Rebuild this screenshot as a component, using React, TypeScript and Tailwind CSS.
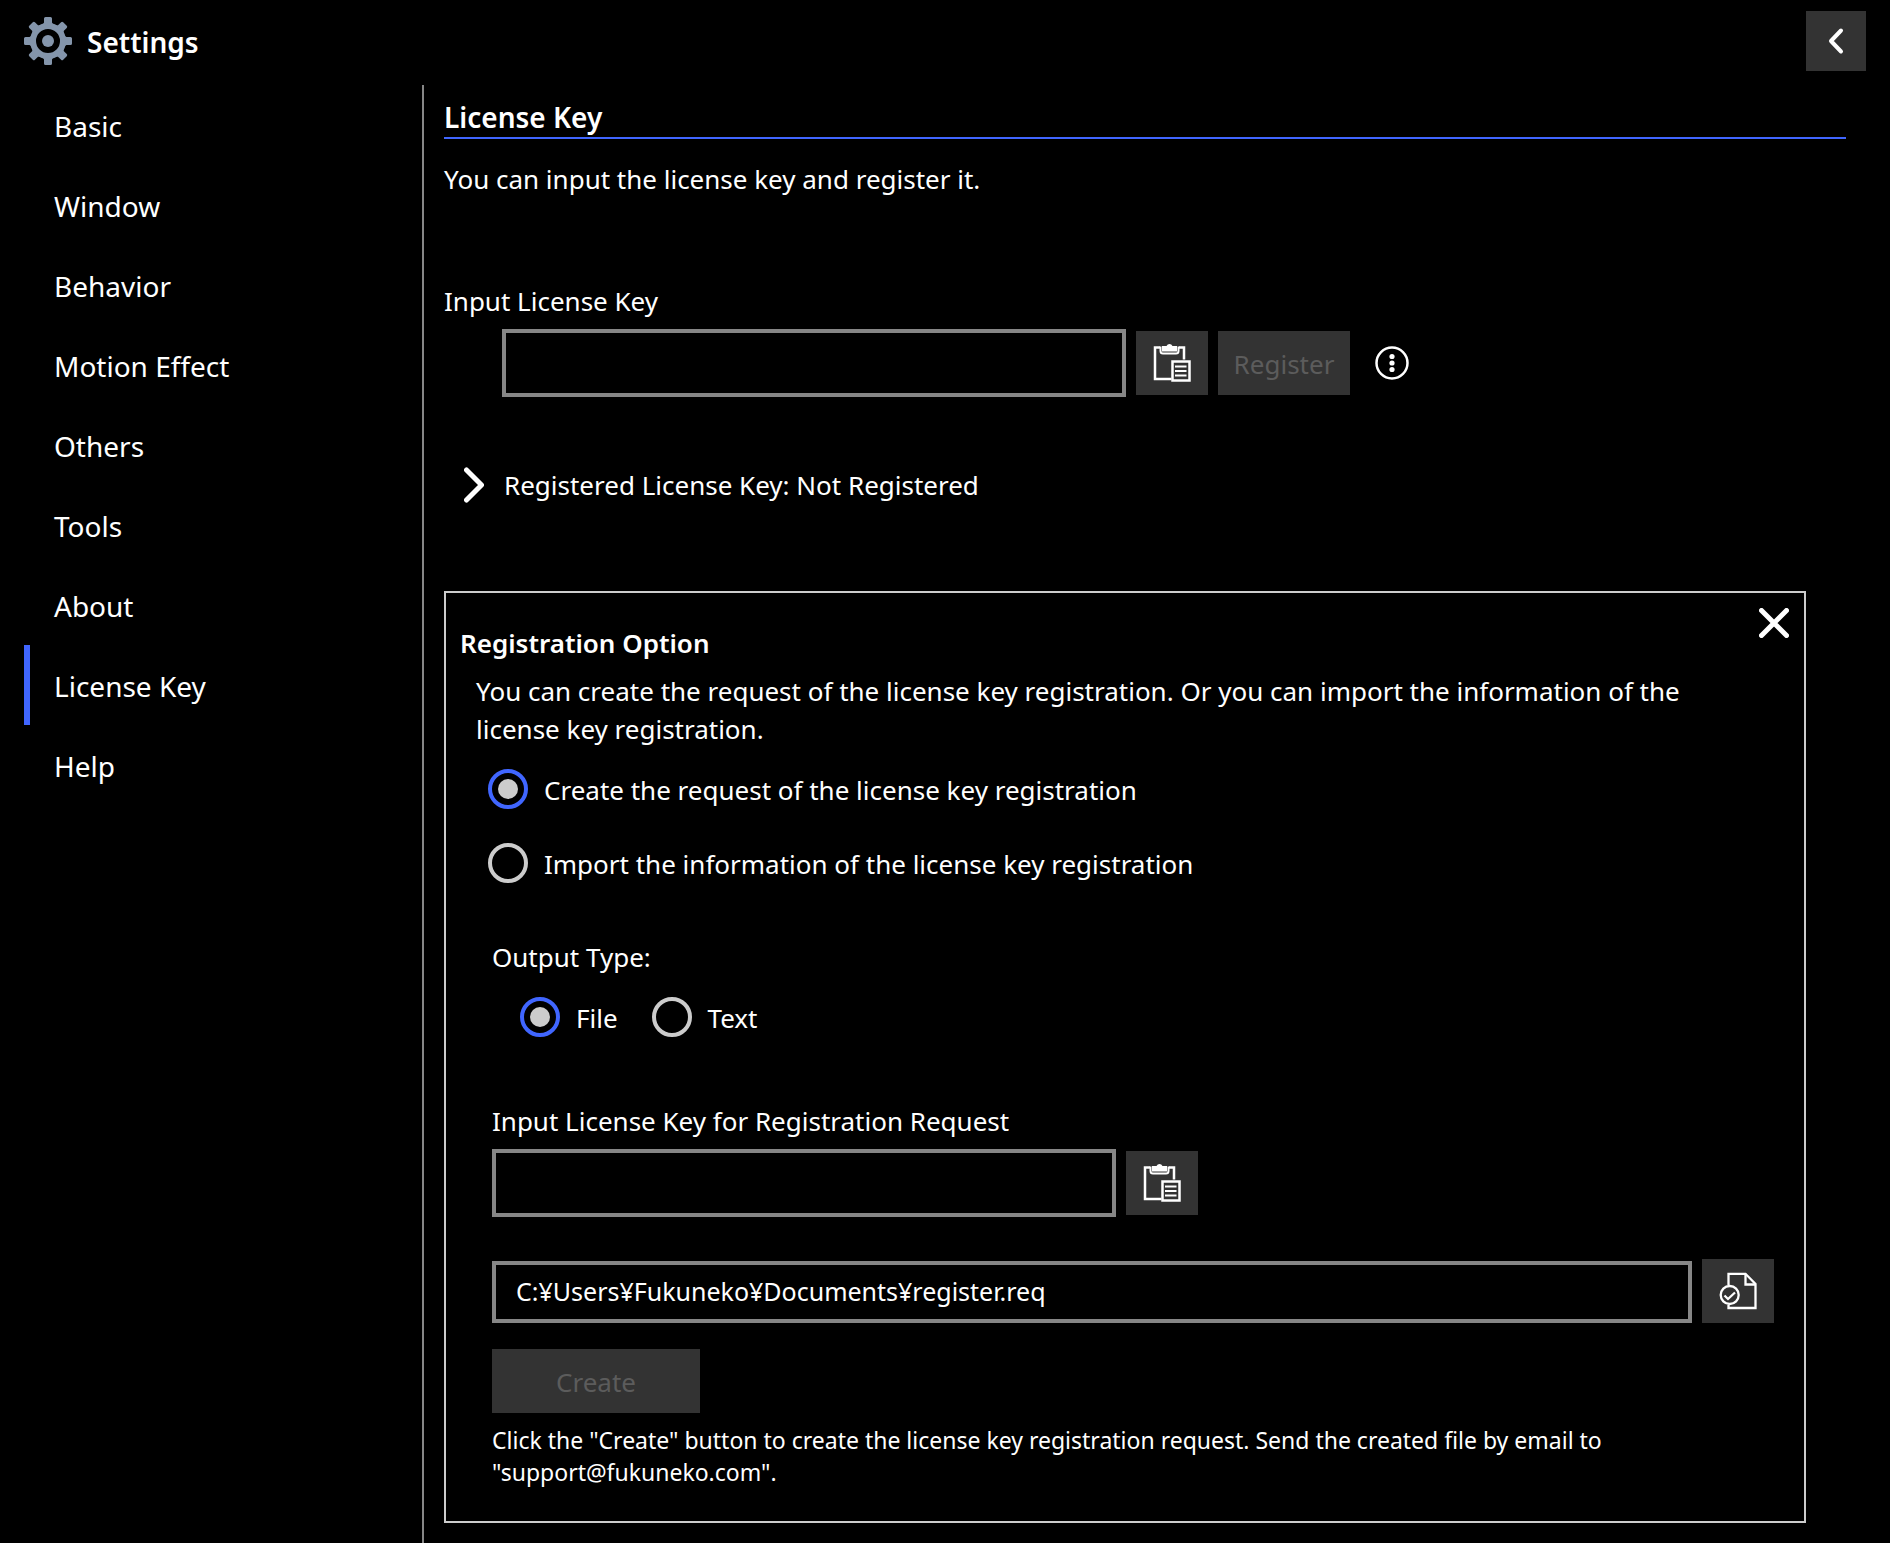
import { useState } from "react";

const NAV_ITEMS = [
  "Basic",
  "Window",
  "Behavior",
  "Motion Effect",
  "Others",
  "Tools",
  "About",
  "License Key",
  "Help",
];

function GearIcon() {
  return (
    <svg viewBox="0 0 48 48" className="size-12 shrink-0" fill="#8495ab" aria-hidden="true">
      {[0, 45, 90, 135, 180, 225, 270, 315].map((angle) => (
        <path
          key={angle}
          transform={`rotate(${angle} 24 24)`}
          d="M20 1.500Q20 0 21.500 0H26.500Q28 0 28 1.500V5.500Q28 6.500 30 7.500V9H18V7.500Q20 6.500 20 5.500Z"
        />
      ))}
      <circle cx="24" cy="24" r="15" fill="none" stroke="#8495ab" strokeWidth="6" />
      <circle cx="24" cy="24" r="6" />
    </svg>
  );
}

function PasteIcon() {
  return (
    <svg viewBox="0 0 72 64" className="h-16 w-[72px]" fill="none" stroke="#fff" strokeWidth="2.500" aria-hidden="true">
      <path d="M24 16.500H19V48H35.500M43 16.500H48V28.500" />
      <path d="M24.500 15.500V20Q24.500 22.500 27 22.500H40Q42.500 22.500 42.500 20V15.500" strokeWidth="2" />
      <path d="M26 15H30.500Q31.500 13 33.500 13T36.500 15H41V20.500H26Z" fill="#fff" stroke="none" />
      <rect x="36.500" y="30.500" width="17" height="19" />
      <path d="M39 35.500H50.500M39 40H50.500M39 44.500H50.500" strokeWidth="2" />
    </svg>
  );
}

function FileCheckIcon() {
  return (
    <svg viewBox="0 0 72 64" className="h-16 w-[72px]" fill="none" stroke="#fff" strokeWidth="2.300" aria-hidden="true">
      <path d="M26.500 26V14.800H43.500L53.500 25V49H26.500V46" />
      <path d="M43.500 14.800V25.500H53.500" />
      <circle cx="27.700" cy="36" r="9" />
      <path d="M22.500 36.500L26 40L33 33.500" />
    </svg>
  );
}

type InputProps = { id: string; value: string; onChange: (v: string) => void };

function KeyInput({ id, value, onChange }: InputProps) {
  return (
    <input
      id={id}
      type="text"
      value={value}
      onChange={(e) => onChange(e.target.value)}
      className="h-[68px] w-full max-w-[624px] border-4 border-[#868686] bg-black px-5 outline-none"
    />
  );
}

function PasteButton() {
  return (
    <button type="button" aria-label="Paste" className="shrink-0 bg-[#333333]">
      <PasteIcon />
    </button>
  );
}

type RadioProps = { name: string; label: string; checked: boolean; onSelect: () => void };

function Radio({ name, label, checked, onSelect }: RadioProps) {
  return (
    <label className="flex h-10 items-center gap-4">
      <input
        type="radio"
        name={name}
        checked={checked}
        onChange={onSelect}
        className="grid size-10 shrink-0 appearance-none place-items-center rounded-full border-4 border-[#cccccc] checked:border-[#4066ff] checked:before:size-5 checked:before:rounded-full checked:before:bg-[#cccccc]"
      />
      <span className="pt-[2px]">{label}</span>
    </label>
  );
}

export default function App() {
  const [active, setActive] = useState("License Key");
  const [licenseKey, setLicenseKey] = useState("");
  const [requestKey, setRequestKey] = useState("");
  const [path, setPath] = useState("C:¥Users¥Fukuneko¥Documents¥register.req");
  const [mode, setMode] = useState("create");
  const [output, setOutput] = useState("file");

  return (
    <div className="flex min-h-screen flex-col bg-black font-['Noto_Sans','Open_Sans',sans-serif] text-[26px] leading-[38px] text-white">
      <header className="flex h-[85px] items-center justify-between px-6 pb-[3px]">
        <div className="flex items-center gap-[15px]">
          <GearIcon />
          <h1 className="pt-[2px] text-[28px] font-semibold">Settings</h1>
        </div>
        <button type="button" aria-label="Back" className="size-[60px] bg-[#333333]">
          <svg viewBox="0 0 60 60" fill="none" stroke="#fff" strokeWidth="4" strokeLinecap="round" strokeLinejoin="round" aria-hidden="true">
            <path d="M35 19.500L25 30L35 40.500" />
          </svg>
        </button>
      </header>

      <div className="flex flex-1">
        <nav className="w-[422px] shrink-0 pl-6">
          <ul>
            {NAV_ITEMS.map((item) => (
              <li key={item}>
                <button
                  type="button"
                  onClick={() => setActive(item)}
                  className={`h-20 w-full border-l-[6px] pt-[2px] pl-6 text-left text-[28px] ${item === active ? "border-[#4066ff]" : "border-transparent"}`}
                >
                  {item}
                </button>
              </li>
            ))}
          </ul>
        </nav>

        <main className="flex-1 border-l-2 border-[#868686] pt-3 pr-11 pb-5 pl-5">
          <h2 className="border-b-2 border-[#4066ff] text-[28px] leading-[40px] font-semibold">License Key</h2>
          <p className="mt-[21px]">You can input the license key and register it.</p>

          <label htmlFor="license-key" className="mt-[84px] block">
            Input License Key
          </label>
          <div className="mt-[9px] flex items-center gap-[10px] pl-[58px]">
            <KeyInput id="license-key" value={licenseKey} onChange={setLicenseKey} />
            <PasteButton />
            <button type="button" disabled className="h-16 w-[132px] shrink-0 bg-[#333333] pt-[2px] text-[#5c5c5c]">
              Register
            </button>
            <button type="button" aria-label="More options" className="ml-[14px] shrink-0">
              <svg viewBox="0 0 36 36" className="size-9" fill="#fff" aria-hidden="true">
                <circle cx="18" cy="18" r="15.500" fill="none" stroke="#fff" strokeWidth="2.500" />
                <circle cx="18" cy="11.500" r="2.600" />
                <circle cx="18" cy="18" r="2.600" />
                <circle cx="18" cy="24.500" r="2.600" />
              </svg>
            </button>
          </div>

          <button type="button" className="mt-[69px] flex items-center gap-5 pl-5">
            <svg viewBox="0 0 20 36" className="h-9 w-5" fill="none" stroke="#fff" strokeWidth="5" strokeLinecap="round" strokeLinejoin="round" aria-hidden="true">
              <path d="M2.500 3L17.500 18L2.500 33" />
            </svg>
            Registered License Key: Not Registered
          </button>

          <section className="relative mt-[87px] mr-10 border-2 border-[#cccccc] pt-[31px] pr-[30px] pb-8 pl-[14px]">
            <button type="button" aria-label="Close" className="absolute top-[15px] right-[15px]">
              <svg viewBox="0 0 30 30" className="size-[30px]" fill="none" stroke="#fff" strokeWidth="5" strokeLinecap="round" aria-hidden="true">
                <path d="M2.500 2.500L27.500 27.500M27.500 2.500L2.500 27.500" />
              </svg>
            </button>

            <h3 className="font-semibold">Registration Option</h3>
            <p className="mt-[10px] pr-16 pl-4">
              You can create the request of the license key registration. Or you can import the information of the
              license key registration.
            </p>

            <div className="mt-[21px] flex flex-col gap-[34px] pl-7">
              <Radio
                name="mode"
                label="Create the request of the license key registration"
                checked={mode === "create"}
                onSelect={() => setMode("create")}
              />
              <Radio
                name="mode"
                label="Import the information of the license key registration"
                checked={mode === "import"}
                onSelect={() => setMode("import")}
              />
            </div>

            <div className="mt-[55px] pl-8">
              <div>Output Type:</div>
              <div className="mt-[21px] flex gap-[34px] pl-7">
                <Radio name="output" label="File" checked={output === "file"} onSelect={() => setOutput("file")} />
                <Radio name="output" label="Text" checked={output === "text"} onSelect={() => setOutput("text")} />
              </div>

              <label htmlFor="request-key" className="mt-[65px] block">
                Input License Key for Registration Request
              </label>
              <div className="mt-[9px] flex items-center gap-[10px]">
                <KeyInput id="request-key" value={requestKey} onChange={setRequestKey} />
                <PasteButton />
              </div>

              <div className="mt-[42px] flex items-end gap-[10px]">
                <input
                  type="text"
                  aria-label="Output file"
                  value={path}
                  onChange={(e) => setPath(e.target.value)}
                  className="h-[62px] min-w-0 flex-1 border-4 border-[#868686] bg-black px-5 pb-[2px] text-[25px] outline-none"
                />
                <button type="button" aria-label="Choose file" className="shrink-0 bg-[#333333]">
                  <FileCheckIcon />
                </button>
              </div>

              <button type="button" disabled className="mt-[26px] block h-16 w-[208px] bg-[#333333] pt-[2px] text-[#5c5c5c]">
                Create
              </button>
              <p className="mt-[11px] pr-[120px] pb-px text-[23px] leading-8">
                Click the "Create" button to create the license key registration request. Send the created file by email to
                "support@fukuneko.com".
              </p>
            </div>
          </section>
        </main>
      </div>
    </div>
  );
}
